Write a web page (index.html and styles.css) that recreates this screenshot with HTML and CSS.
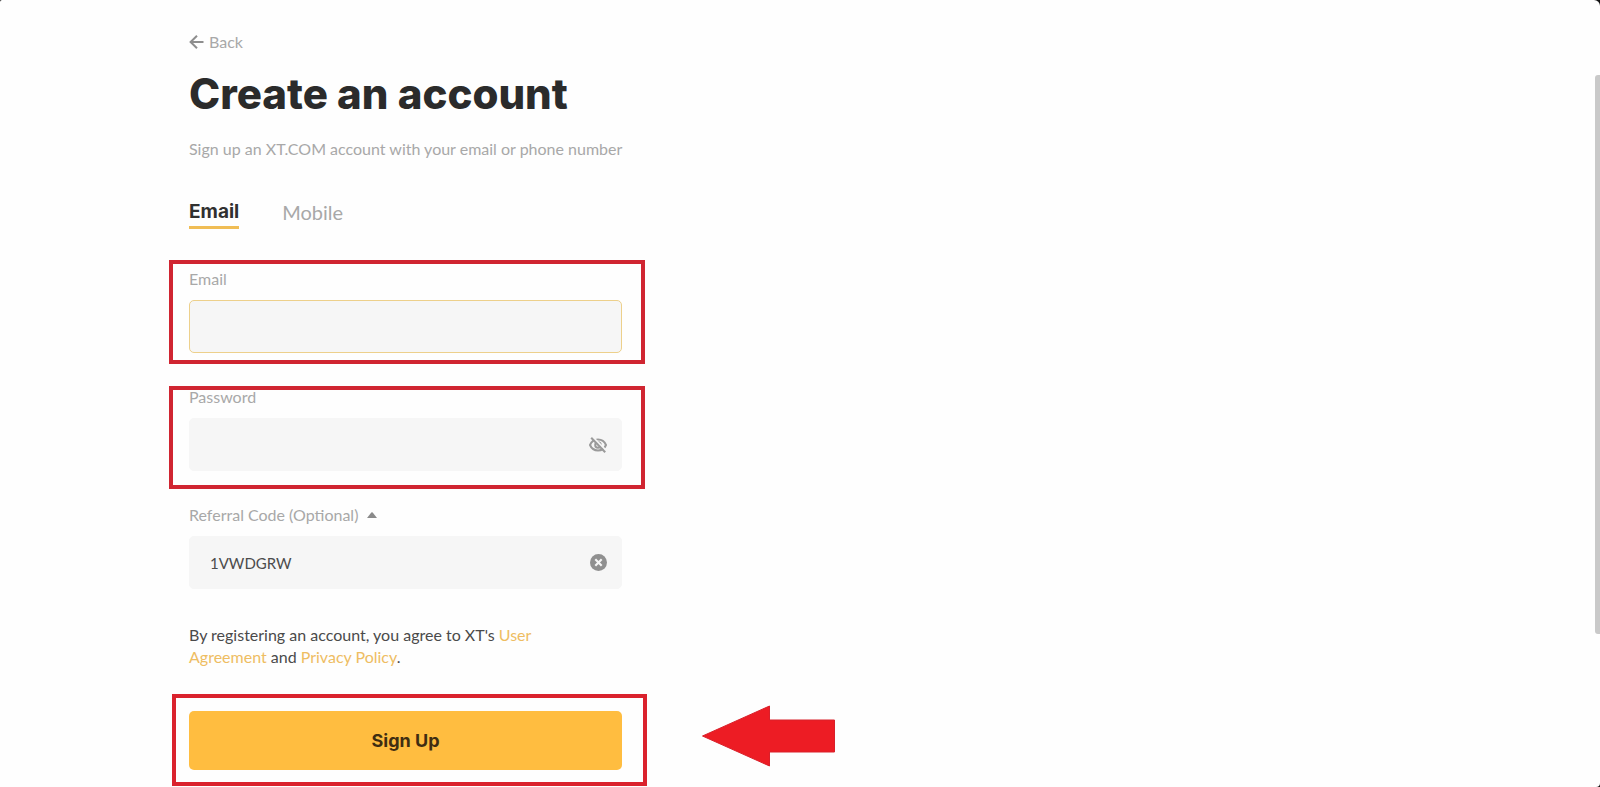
FILE: index.html
```html
<!DOCTYPE html>
<html lang="en">
<head>
<meta charset="utf-8">
<meta name="viewport" content="width=device-width, initial-scale=1">
<title>Create an account</title>
<link rel="stylesheet" href="styles.css">
</head>
<body>
<main class="page">
  <form class="signup">
    <a class="back" href="#">
      <svg class="back-icon" viewBox="0 0 15 14" aria-hidden="true"><path d="M8 0.8 1.6 7 8 13.2M1.8 7H14.5"/></svg>
      <span>Back</span>
    </a>
    <h1 class="title">Create an account</h1>
    <p class="subtitle">Sign up an XT.COM account with your email or phone number</p>

    <div class="tabs">
      <button class="tab tab-active" type="button">Email</button>
      <button class="tab" type="button">Mobile</button>
    </div>

    <div class="field marked">
      <label class="label" for="email">Email</label>
      <input class="input input-focus" id="email" type="email">
    </div>

    <div class="field marked">
      <label class="label" for="password">Password</label>
      <div class="control">
        <input class="input" id="password" type="password">
        <button class="icon-button" type="button" aria-label="Show password">
          <svg viewBox="0 0 18 16" class="eye" aria-hidden="true">
            <path d="M1 8C2.4 4.6 5.400 2.600 9 2.600S15.600 4.600 17 8C15.600 11.400 12.600 13.400 9 13.400S2.400 11.400 1 8Z"/>
            <circle cx="9" cy="8" r="2.800"/>
            <path class="eye-gap" d="M4 0.400 18 14.400"/>
            <path d="M2.200 0.800 16.200 15.200"/>
          </svg>
        </button>
      </div>
    </div>

    <div class="field">
      <label class="label" for="referral">Referral Code (Optional)
        <svg class="caret" viewBox="0 0 10 6" aria-hidden="true"><path d="M0 6 4.300 0.600Q5 0 5.700 0.600L10 6Z"/></svg>
      </label>
      <div class="control">
        <input class="input" id="referral" type="text" value="1VWDGRW">
        <button class="icon-button" type="button" aria-label="Clear">
          <svg class="clear" viewBox="0 0 16 16" aria-hidden="true"><circle cx="8" cy="8" r="8"/><path d="M5 5 11 11M11 5 5 11"/></svg>
        </button>
      </div>
    </div>

    <p class="terms">By registering an account, you agree to XT's <a href="#">User Agreement</a> and <a href="#">Privacy Policy</a>.</p>

    <div class="submit marked">
      <button class="submit-button" type="submit">Sign Up</button>
      <svg class="pointer" viewBox="0 0 134 62" aria-hidden="true"><path d="M1 31 68 1V15H133V47H68V61Z"/></svg>
    </div>
  </form>
  <div class="scroll-thumb"></div>
</main>
</body>
</html>
```
FILE: styles.css
```css
* {
  box-sizing: border-box;
}

html {
  background: #111;
}

body {
  margin: 0;
  font-family: Lato, "Liberation Sans", sans-serif;
  font-size: 16px;
  line-height: 22px;
  color: #4a4a4a;
}

.page {
  position: relative;
  min-height: 100vh;
  padding: 31px 24px 16px 189px;
  background: #fefefe;
  border-radius: 2px 6px 4px 0;
}

.signup {
  display: flex;
  flex-direction: column;
  align-items: stretch;
  max-width: 433px;
}

button,
input {
  margin: 0;
  padding: 0;
  border: 0;
  background: none;
  font: inherit;
  color: inherit;
}

a {
  color: #eebd62;
  text-decoration: none;
}

.back {
  display: flex;
  align-items: center;
  gap: 5px;
  align-self: flex-start;
  color: #a8a8a8;
}

.back-icon {
  width: 15px;
  height: 14px;
  fill: none;
  stroke: #8e8e8e;
  stroke-width: 2;
}

.title {
  margin: 14px 0 17px;
  font-family: Inter, "Liberation Sans", sans-serif;
  font-size: 42px;
  line-height: 54px;
  font-weight: 800;
  color: #2b2b2b;
  white-space: nowrap;
}

.subtitle {
  margin: 0;
  color: #a8a8a8;
  white-space: nowrap;
}

.tabs {
  display: flex;
  gap: 43px;
  margin: 38px 0 39px;
}

.tab {
  border-bottom: 3px solid transparent;
  font-size: 20px;
  line-height: 28px;
  color: #a8a8a8;
}

.tab-active {
  border-color: #f0bd55;
  font-family: Inter, "Liberation Sans", sans-serif;
  font-size: 19px;
  font-weight: 700;
  color: #303030;
}

.field {
  display: flex;
  flex-direction: column;
  gap: 10px;
  margin-bottom: 33px;
}

.label {
  display: flex;
  align-items: center;
  gap: 9px;
  color: #a8a8a8;
}

.control {
  display: grid;
  position: relative;
}

.input {
  width: 100%;
  height: 53px;
  padding: 0 48px 0 20px;
  border: 1px solid #f6f6f6;
  border-radius: 5px;
  background: #f6f6f6;
  font-size: 15px;
  color: #4c4c4c;
  outline: none;
}

.input-focus {
  border-color: #edd08b;
}

.icon-button {
  display: flex;
  position: absolute;
  top: 0;
  right: 15px;
  height: 100%;
  align-items: center;
}

.eye {
  width: 18px;
  height: 16px;
  fill: none;
  stroke: #9a9a9a;
  stroke-width: 2;
}

.eye .eye-gap {
  stroke: #f6f6f6;
}

.clear {
  width: 17px;
  height: 17px;
  fill: #909090;
}

.clear path {
  stroke: #f6f6f6;
  stroke-width: 2;
}

.caret {
  width: 10px;
  height: 6px;
  fill: #8a8a8a;
}

.terms {
  max-width: 360px;
  margin: 2px 0 43px;
}

.submit-button {
  width: 100%;
  height: 59px;
  border-radius: 5px;
  background: #ffbd40;
  font-family: Inter, "Liberation Sans", sans-serif;
  font-size: 18px;
  font-weight: 700;
  color: #3f2d12;
}

.submit {
  display: flex;
}

.marked {
  position: relative;
}

.marked::before {
  content: "";
  position: absolute;
  inset: -8px -23px -11px -20px;
  border: 4px solid #d02531;
  pointer-events: none;
}

.field.marked + .field.marked::before {
  inset: 0 -23px -18px -20px;
}

.submit.marked::before {
  inset: -17px -25px -16px -17px;
  border-color: #da222d;
}

.pointer {
  position: absolute;
  left: 512px;
  top: -6px;
  width: 135px;
  height: 62px;
  fill: #ed1c24;
  stroke: #d9202a;
  stroke-linejoin: round;
}

.scroll-thumb {
  position: absolute;
  top: 75px;
  right: 0;
  width: 5px;
  height: 559px;
  border-radius: 3px 0 0 3px;
  background: #c9c9c9;
}
```
